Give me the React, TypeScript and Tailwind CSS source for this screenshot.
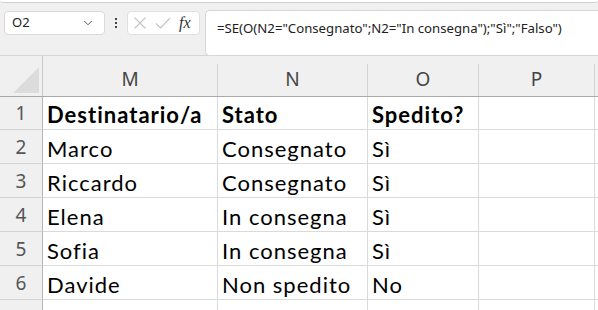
import { ChevronDown } from 'lucide-react';

const columns = [
  { id: 'M', w: 'w-[175px]' },
  { id: 'N', w: 'w-[150px]' },
  { id: 'O', w: 'w-[111px]' },
  { id: 'P', w: 'w-[116px]' },
];

const rows: string[][] = [
  ['Destinatario/a', 'Stato', 'Spedito?', ''],
  ['Marco', 'Consegnato', 'Sì', ''],
  ['Riccardo', 'Consegnato', 'Sì', ''],
  ['Elena', 'In consegna', 'Sì', ''],
  ['Sofia', 'In consegna', 'Sì', ''],
  ['Davide', 'Non spedito', 'No', ''],
  ['', '', '', ''],
];

const uiFont = { fontFamily: '"Noto Sans", "Open Sans", sans-serif' };
const cellFont = { fontFamily: 'Lato, "Liberation Sans", sans-serif' };

function FormulaBar() {
  return (
    <div className="h-[53px] border-b border-[#d6d6d6] flex items-start pt-[7px]" style={uiFont}>
      {/* Name box */}
      <div className="ml-[4px] mt-[1px] w-[101px] h-[24px] bg-white border border-[#d9d9d9] rounded-[4px] flex items-center justify-between pl-[7px] pr-[9px]">
        <span className="text-[13px] text-[#222]">O2</span>
        <ChevronDown size={14} strokeWidth={1.5} className="text-[#444]" />
      </div>
      {/* kebab */}
      <div className="w-[22px] h-[26px] flex flex-col items-center justify-center gap-[2px]">
        <span className="w-[2px] h-[2px] bg-[#444]" />
        <span className="w-[2px] h-[2px] bg-[#444]" />
        <span className="w-[2px] h-[2px] bg-[#444]" />
      </div>
      {/* cancel / enter / fx */}
      <div className="mt-[1px] w-[73px] h-[24px] bg-white border border-[#e0e0e0] rounded-[4px] flex items-center pl-[5px] gap-[8px]">
        <svg width="14" height="14" viewBox="0 0 14 14" className="shrink-0">
          <path d="M1.5 1.5 L12.5 12.5 M12.5 1.5 L1.5 12.5" stroke="#c4c4c4" strokeWidth="1.1" fill="none" />
        </svg>
        <svg width="16" height="14" viewBox="0 0 16 14" className="shrink-0">
          <path d="M1 7.5 L5.5 12 L15 2" stroke="#c4c4c4" strokeWidth="1.1" fill="none" />
        </svg>
        <span className="text-[16px] italic text-[#333] leading-none" style={{ fontFamily: '"Liberation Serif", serif' }}>
          fx
        </span>
      </div>
      {/* formula input */}
      <div className="ml-[5px] flex-1 h-[46px] bg-white border border-[#d6d6d6] border-r-0 rounded-l-[5px] pl-[11px] pt-[4px]">
        <span className="text-[13.2px] text-[#222] whitespace-nowrap">
          =SE(O(N2="Consegnato";N2="In consegna");"Sì";"Falso")
        </span>
      </div>
    </div>
  );
}

function ColumnHeaders() {
  return (
    <div className="flex h-[41px] border-b border-[#a9a9a9]" style={uiFont}>
      <div className="w-[43px] shrink-0 border-r border-[#c8c8c8] relative">
        <div className="absolute right-[3px] bottom-[3px] w-0 h-0 border-l-[26px] border-l-transparent border-b-[26px] border-b-[#dcdcdc]" />
      </div>
      {columns.map((c) => (
        <div key={c.id} className={`${c.w} shrink-0 flex items-end justify-center pb-[5px] border-r border-[#d4d4d4] mt-[8px]`}>
          <span className="text-[19px] text-[#444] leading-none pb-[2px]">{c.id}</span>
        </div>
      ))}
      <div className="flex-1" />
    </div>
  );
}

export default function App() {
  return (
    <div className="w-[598px] h-[310px] overflow-hidden bg-[#f0f0f0] relative">
      <div className="h-[3px] bg-white border-b border-[#d0d0d0] rounded-b-[5px]" />
      <FormulaBar />
      <ColumnHeaders />
      <div style={cellFont}>
        {rows.map((r, i) => (
          <div key={i} className={`flex ${i === 0 ? 'h-[33px]' : 'h-[34px]'}`}>
            <div className="w-[43px] shrink-0 bg-[#f0f0f0] border-r border-[#b4b4b4] border-b border-b-[#d4d4d4] flex items-center justify-center" style={uiFont}>
              <span className="text-[19px] text-[#555] pt-[1px]">{i + 1}</span>
            </div>
            {columns.map((c, j) => (
              <div
                key={c.id}
                className={`${c.w} shrink-0 bg-white border-r border-b border-[#dadada] flex items-center pl-[4px] pt-[3px]`}
              >
                <span className={`text-[22px] tracking-[1px] text-black whitespace-nowrap ${i === 0 ? 'font-bold' : ''}`}>
                  {r[j]}
                </span>
              </div>
            ))}
            <div className="flex-1 bg-white border-b border-[#dadada]" />
          </div>
        ))}
      </div>
    </div>
  );
}
